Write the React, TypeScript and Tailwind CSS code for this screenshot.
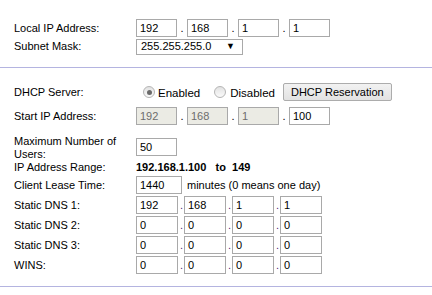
import React from 'react';

const font = "font-['Liberation_Sans',Arial,sans-serif]";

const Box = ({ v, w = 'w-[41px]', disabled = false }: { v: string; w?: string; disabled?: boolean }) => (
  <div className={`${w} h-[18px] shrink-0 border border-[#a9a9a9] pl-[3px] flex items-center leading-none ${disabled ? 'bg-[#ebebe4] text-[#6d6d6d]' : 'bg-white text-black'}`}>{v}</div>
);

const WideIp = ({ vals, disabledCount = 0 }: { vals: string[]; disabledCount?: number }) => (
  <div className="flex items-center">
    {vals.map((v, i) => (
      <React.Fragment key={i}>
        {i > 0 && <span className="w-[10px] shrink-0 text-center">.</span>}
        <Box v={v} disabled={i < disabledCount} />
      </React.Fragment>
    ))}
  </div>
);

const NarrowIp = ({ vals }: { vals: string[] }) => (
  <div className="flex items-center">
    {vals.map((v, i) => (
      <React.Fragment key={i}>
        {i > 0 && <span className="w-[6px] shrink-0 text-right pr-[1px] text-[#5a2a7a]">.</span>}
        <Box v={v} w="w-[42px]" />
      </React.Fragment>
    ))}
  </div>
);

const Row = ({ label, h = 'h-[18px]', mt = 'mt-0', children }: { label: React.ReactNode; h?: string; mt?: string; children?: React.ReactNode }) => (
  <div className={`flex items-center ${h} ${mt}`}>
    <div className="w-[136px] shrink-0 pl-[14px] leading-[13px]">{label}</div>
    <div className="flex items-center whitespace-nowrap">{children}</div>
  </div>
);

const Radio = ({ checked }: { checked: boolean }) => (
  <span className="w-[12px] h-[12px] shrink-0 rounded-full border border-[#b5b5b5] bg-gradient-to-b from-[#e2e2e2] to-[#fafafa] flex items-center justify-center">
    {checked && <span className="w-[5px] h-[5px] rounded-full bg-[#6a6a6a]" />}
  </span>
);

export default function App() {
  return (
    <div className={`w-[432px] h-[295px] bg-white text-[11px] text-black ${font} overflow-hidden`}>
      <div className="pt-[19px]">
        <Row label="Local IP Address:">
          <WideIp vals={['192', '168', '1', '1']} />
        </Row>
        <Row label="Subnet Mask:" h="h-[17px]" mt="mt-[1px]">
          <div className="w-[107px] h-[16px] border border-[#a9a9a9] bg-white flex items-center justify-between pl-[4px] pr-[7px] leading-none">
            <span>255.255.255.0</span>
            <span className="text-[9px]">▼</span>
          </div>
        </Row>
      </div>

      <div className="mt-[12px] h-px bg-[#b4b4e0]" />

      <div className="pt-[15px]">
        <Row label="DHCP Server:">
          <div className="flex items-center ml-[7px]">
            <Radio checked />
            <span className="ml-[3px] text-[11.5px] mt-[3px]">Enabled</span>
            <span className="ml-[14px]"><Radio checked={false} /></span>
            <span className="ml-[4px] text-[11.5px] mt-[3px]">Disabled</span>
            <button className="ml-[8px] h-[18px] px-[7px] border border-[#acacac] rounded-[2px] bg-gradient-to-b from-[#f2f2f2] to-[#e2e2e2] leading-none text-[11px]">DHCP Reservation</button>
          </div>
        </Row>
        <Row label="Start IP Address:" mt="mt-[6px]">
          <WideIp vals={['192', '168', '1', '100']} disabledCount={3} />
        </Row>
        <Row label={<>Maximum Number of<br />Users:</>} h="h-[26px]" mt="mt-[10px]">
          <div className="mt-[-2px]"><Box v="50" /></div>
        </Row>
        <Row label="IP Address Range:" h="h-[13px]">
          <span className="font-bold">192.168.1.100&nbsp;&nbsp;&nbsp;to&nbsp;&nbsp;149</span>
        </Row>
        <Row label="Client Lease Time:" mt="mt-[2px]">
          <Box v="1440" w="w-[46px]" />
          <span className="ml-[5px]">minutes (0 means one day)</span>
        </Row>
        <Row label="Static DNS 1:" mt="mt-[2px]">
          <NarrowIp vals={['192', '168', '1', '1']} />
        </Row>
        <Row label="Static DNS 2:" mt="mt-[2px]">
          <NarrowIp vals={['0', '0', '0', '0']} />
        </Row>
        <Row label="Static DNS 3:" mt="mt-[2px]">
          <NarrowIp vals={['0', '0', '0', '0']} />
        </Row>
        <Row label="WINS:" mt="mt-[2px]">
          <NarrowIp vals={['0', '0', '0', '0']} />
        </Row>
      </div>

      <div className="mt-[12px] h-px bg-[#b4b4e0]" />
    </div>
  );
}
